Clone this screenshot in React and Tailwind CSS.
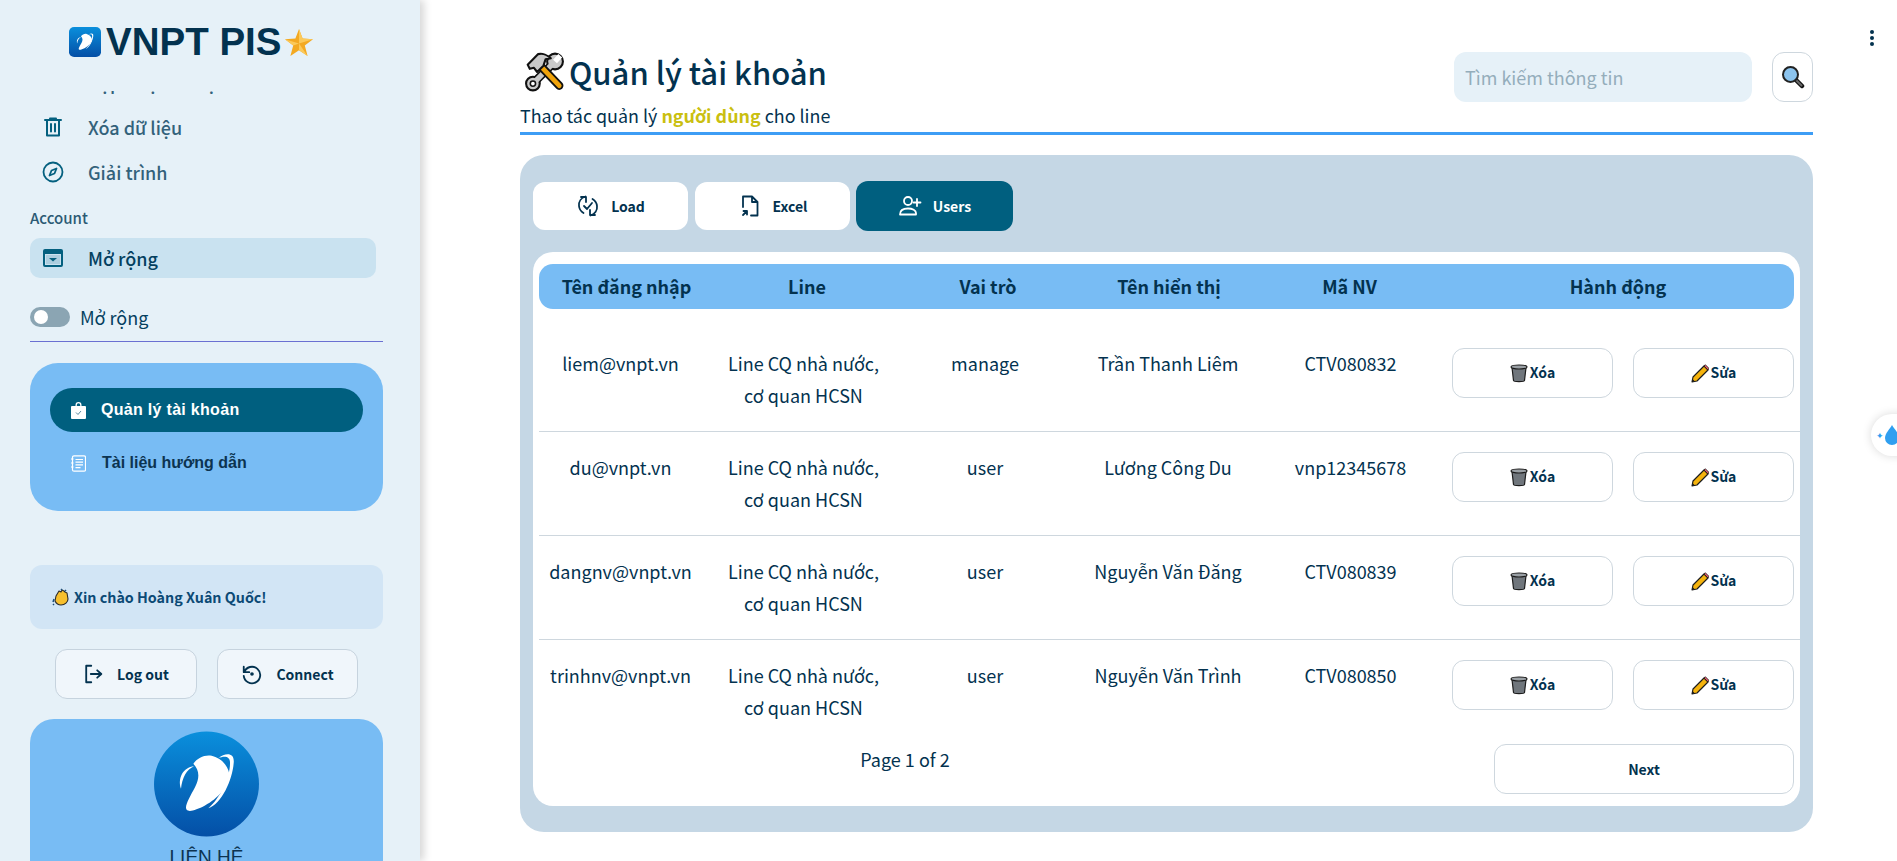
import React from 'react';

const SOURCE = "font-['Noto_Sans_CJK_SC','Noto_Sans',sans-serif]";
const ARIAL = "font-['Liberation_Sans',Arial,sans-serif]";

const rows = [
  { user: 'liem@vnpt.vn', role: 'manage', name: 'Trần Thanh Liêm', code: 'CTV080832' },
  { user: 'du@vnpt.vn', role: 'user', name: 'Lương Công Du', code: 'vnp12345678' },
  { user: 'dangnv@vnpt.vn', role: 'user', name: 'Nguyễn Văn Đăng', code: 'CTV080839' },
  { user: 'trinhnv@vnpt.vn', role: 'user', name: 'Nguyễn Văn Trình', code: 'CTV080850' },
];

const Stroke = ({ size = 24, width = 2, children, className = '' }) => (
  <svg width={size} height={size} viewBox="0 0 24 24" fill="none" stroke="currentColor" strokeWidth={width} strokeLinecap="round" strokeLinejoin="round" className={className}>
    {children}
  </svg>
);

// VNPT swoosh, drawn in the circle's own coordinates
const VnptMark = () => (
  <g fill="#fff">
    <path d="M140 268C132 258 150 228 165 200C180 170 178 150 160 130C172 112 195 102 215 106C240 112 262 130 268 160C272 190 235 235 195 255C170 268 148 276 140 268Z" />
    <path d="M123 205C112 172 130 140 162 137C140 146 126 172 123 205Z" />
    <path d="M235 113C255 97 285 94 281 128C277 178 245 250 205 263C240 235 270 170 270 130C272 108 255 104 235 113Z" />
  </g>
);

const LogoSquare = () => (
  <svg width="32" height="30" viewBox="42 33 315 315" preserveAspectRatio="none">
    <defs>
      <linearGradient id="sq" x1="0" y1="0" x2="0" y2="1">
        <stop offset="0" stopColor="#0a8fdc" />
        <stop offset="1" stopColor="#044fa6" />
      </linearGradient>
    </defs>
    <rect x="42" y="33" width="315" height="315" rx="50" fill="url(#sq)" />
    <VnptMark />
  </svg>
);

const LogoCircle = () => (
  <svg width="105" height="106" viewBox="42 33 315 315">
    <defs>
      <linearGradient id="ci" x1="0" y1="0" x2="0" y2="1">
        <stop offset="0" stopColor="#0a8fdc" />
        <stop offset="1" stopColor="#044fa6" />
      </linearGradient>
    </defs>
    <circle cx="199.5" cy="190.5" r="157.5" fill="url(#ci)" />
    <VnptMark />
  </svg>
);

const StarIcon = () => (
  <svg width="28" height="27" viewBox="0 0 28 27">
    <path d="M14 0L17.6 9.6L28 10.2L19.8 16.6L22.6 27L14 21.2L5.4 27L8.2 16.6L0 10.2L10.4 9.6Z" fill="#f3a922" />
    <path d="M14 0L17.6 9.6L28 10.2L14 14.5ZM22.6 27L14 21.2V14.5ZM0 10.2L14 14.5L8.2 16.6Z" fill="#fbc95a" />
  </svg>
);

const ToolsEmoji = () => (
  <svg width="41" height="40" viewBox="0 0 38 38">
    {/* wrench */}
    <path d="M29 9L9 29" stroke="#111" strokeWidth="8" strokeLinecap="round" />
    <circle cx="29" cy="9" r="7.500" fill="#c9c9c9" stroke="#111" strokeWidth="2" />
    <circle cx="8" cy="30" r="6.500" fill="#c9c9c9" stroke="#111" strokeWidth="2" />
    <path d="M29 9L9 29" stroke="#c9c9c9" strokeWidth="5" />
    <path d="M29 9L34 3.500" stroke="#fff" strokeWidth="5" />
    <circle cx="8" cy="30" r="2.500" fill="#fff" stroke="#111" strokeWidth="1.500" />
    {/* hammer */}
    <path d="M14 12L33 32" stroke="#111" strokeWidth="8" strokeLinecap="round" />
    <path d="M14 12L33 32" stroke="#f0a30a" strokeWidth="4.500" strokeLinecap="round" />
    <path d="M3 12L13 2C17 1 22 3 25 6L20 7L18 13L12 19L9 15L5 16Z" fill="#c9c9c9" stroke="#111" strokeWidth="2" strokeLinejoin="round" />
  </svg>
);

const MagnifierEmoji = () => (
  <svg width="24" height="24" viewBox="0 0 24 24">
    <path d="M14 14l7 7" stroke="#111" strokeWidth="4.500" strokeLinecap="round" />
    <path d="M15 15l5.500 5.500" stroke="#6a6a6a" strokeWidth="2" strokeLinecap="round" />
    <circle cx="9.500" cy="9.500" r="7.500" fill="#8cc4ee" stroke="#222" strokeWidth="2" />
  </svg>
);

const TrashEmoji = () => (
  <svg width="18" height="19" viewBox="0 0 18 19">
    <path d="M2 3.500l1.500 13c.2 1.500 10.800 1.500 11 0l1.500-13Z" fill="#70767c" stroke="#1c1c1c" strokeWidth="1.200" />
    <ellipse cx="9" cy="3" rx="8" ry="2" fill="#9aa0a5" stroke="#1c1c1c" strokeWidth="1.200" />
  </svg>
);

const PencilEmoji = () => (
  <svg width="18" height="19" viewBox="0 0 18 19">
    <path d="M1 18l1-5L13 2l4 4L6 17Z" fill="#f5b30d" stroke="#1c1c1c" strokeWidth="1.200" strokeLinejoin="round" />
    <path d="M13 2l1.300-1.300 3.500 3.500L17 6Z" fill="#e5596a" stroke="#1c1c1c" strokeWidth="0.800" />
    <path d="M1 18l.6-3 2.400 2.400Z" fill="#1c1c1c" />
  </svg>
);

const WaveEmoji = () => (
  <svg width="18" height="19" viewBox="0 0 18 19">
    <path d="M4 8l3-5 2 1 1-2 2 1 1 1 2 1 1 6c0 3-3 6-7 6-3 0-5-2-6-4Z" fill="#f7bf2d" stroke="#2a2a2a" strokeWidth="1.100" strokeLinejoin="round" />
    <path d="M1 14l1-3M2 17l-1-1M9 2l1-1M13 3l1-1" stroke="#1d4f7a" strokeWidth="1.500" />
  </svg>
);

const SideRow = ({ icon, label, active }) => (
  <div className={`flex h-[40px] shrink-0 items-center rounded-[10px] ${active ? 'bg-[#c9e2f0] text-[#04405f]' : 'text-[#33627b]'}`}>
    <span className="flex w-[45px] justify-center text-[#04607f]">{icon}</span>
    <span className="ml-[13px] text-[18px] leading-[26px] font-medium">{label}</span>
  </div>
);

function Sidebar() {
  return (
    <aside className={`${SOURCE} h-[861px] w-[420px] shrink-0 overflow-hidden bg-[#e6f1f8] pl-[30px] pr-[37px] shadow-[4px_0_8px_rgba(0,0,0,0.16)]`}>
      <div className={`${ARIAL} ml-[39px] flex h-[91px] items-start pt-[27px]`}>
        <LogoSquare />
        <span className="ml-[5px] text-[38.500px] leading-[30px] font-bold text-[#03324f]">VNPT PIS</span>
        <span className="ml-[4px] mt-[2px]"><StarIcon /></span>
      </div>

      {/* menu is scrolled, only the bottoms of the first row show */}
      <div className="flex h-[101px] flex-col justify-end gap-[5px] overflow-hidden">
        <SideRow label="Cập nhật dữ liệu" icon={<Stroke size={22} />} />
        <SideRow
          label="Xóa dữ liệu"
          icon={
            <Stroke size={24}>
              <path d="M4 5h16M9 3.500h6M6 5v15.500h12V5M10 9v7.500M14 9v7.500" />
            </Stroke>
          }
        />
        <SideRow
          label="Giải trình"
          icon={
            <Stroke size={24} width={1.800}>
              <circle cx="12" cy="12" r="9.500" />
              <path d="M15.500 8.500l-2 5-5 2 2-5Z" />
            </Stroke>
          }
        />
      </div>

      <div className="mt-[15px] text-[15px] leading-[22px] font-medium text-[#2c5a74]">Account</div>
      <div className="mt-[9px] w-[346px]">
        <SideRow
          active
          label="Mở rộng"
          icon={
            <svg width="24" height="24" viewBox="0 0 24 24" fill="currentColor">
              <path fillRule="evenodd" d="M4 3h16a2 2 0 012 2v14a2 2 0 01-2 2H4a2 2 0 01-2-2V5a2 2 0 012-2Zm0 5v11h16V8Z" />
              <path d="M5 9h14v9H5Z" opacity="0.15" />
              <path d="M8 12h8l-4 3.500Z" />
            </svg>
          }
        />
      </div>

      <div className="mt-[29px] flex items-center text-[#04405f]">
        <div className="flex h-[20px] w-[40px] items-center rounded-full bg-[#8ba5b3] pl-[4px]">
          <div className="h-[14px] w-[14px] rounded-full bg-white" />
        </div>
        <span className="ml-[10px] text-[18px] leading-[20px]">Mở rộng</span>
      </div>
      <div className="mt-[14px] h-px bg-[#6a70d2]" />

      <div className="mt-[21px] h-[148px] rounded-[28px] bg-[#78bcf4] px-[20px] pt-[25px]">
        <div className={`${ARIAL} flex h-[44px] items-center rounded-[22px] bg-[#005f7f] pl-[21px] text-[16px] tracking-[0.3px] font-bold text-white`}>
          <svg width="15" height="17" viewBox="0 0 15 17" fill="#fff">
            <path fillRule="evenodd" d="M4.500 4V3a3 3 0 016 0v1H14a1 1 0 011 1v11a1 1 0 01-1 1H1a1 1 0 01-1-1V5a1 1 0 011-1Zm1.300 0h3.400V3a1.700 1.700 0 00-3.400 0Z" />
            <path d="M5 10.500l2 2 3-3.500" stroke="#5a8aa0" strokeWidth="1" fill="none" />
          </svg>
          <span className="ml-[15px]">Quản lý tài khoản</span>
        </div>
        <div className={`${ARIAL} mt-[9px] flex h-[44px] items-center pl-[21px] text-[16px] font-bold text-[#0c3350]`}>
          <svg width="15" height="17" viewBox="0 0 15 17" fill="none" stroke="#fff" strokeWidth="1.200">
            <rect x="1.500" y="0.800" width="13" height="15.400" rx="1.500" />
            <path d="M4.500 4.500h7.500M4.500 7.200h7.500M4.500 9.900h7.500M4.500 12.600h5M0 4h2.500M0 8h2.500M0 12h2.500" />
          </svg>
          <span className="ml-[16px]">Tài liệu hướng dẫn</span>
        </div>
      </div>

      <div className="mt-[54px] flex h-[64px] items-center rounded-[12px] bg-[#d2e5f5] pl-[22px]">
        <WaveEmoji />
        <span className="ml-[4px] text-[14.300px] leading-[20px] font-bold text-[#0c4a75]">Xin chào Hoàng Xuân Quốc!</span>
      </div>

      <div className="mt-[20px] ml-[25px] flex gap-[20px]">
        <button className="flex h-[50px] w-[142px] items-center justify-center rounded-[12px] border border-[#c6d3de] bg-[#f0f6fb] text-[14px] font-bold text-[#03324f]">
          <Stroke size={22}>
            <path d="M9 3H3.500v18H9M8.500 12H20M15.500 8l4.500 4-4.500 4" />
          </Stroke>
          <span className="ml-[12px]">Log out</span>
        </button>
        <button className="flex h-[50px] w-[141px] items-center justify-center rounded-[12px] border border-[#c6d3de] bg-[#f0f6fb] text-[14px] font-bold text-[#03324f]">
          <Stroke size={22}>
            <path d="M3 4v6h6M3.500 10a9 9 0 11-.5 4" />
            <circle cx="12" cy="12" r="1" fill="currentColor" />
          </Stroke>
          <span className="ml-[13px]">Connect</span>
        </button>
      </div>

      <div className="mt-[20px] flex h-[200px] flex-col items-center rounded-[24px] bg-[#78bcf4] pt-[12px]">
        <LogoCircle />
        <div className={`${ARIAL} mt-[8px] text-[19px] leading-[24px] text-[#0c3350]`}>LIÊN HỆ</div>
      </div>
    </aside>
  );
}

const ToolButton = ({ icon, label, active, className = '' }) => (
  <button className={`flex items-center justify-center rounded-[12px] text-[14px] font-bold ${active ? 'h-[50px] w-[157px] bg-[#005f7f] text-white' : 'h-[48px] w-[155px] bg-white text-[#03324f]'} ${className}`}>
    {icon}
    <span className="ml-[11px]">{label}</span>
  </button>
);

function Table() {
  return (
    <div className="mt-[21px] ml-[13px] mr-[13px] rounded-[20px] bg-white pt-[12px] pb-[12px] text-[#03324f]">
      <div className="ml-[6px] mr-[6px] grid h-[45px] grid-cols-[175px_186px_176px_186px_175px_1fr] items-center rounded-[14px] bg-[#78bcf4] text-center text-[18px] font-bold">
        <span>Tên đăng nhập</span>
        <span>Line</span>
        <span>Vai trò</span>
        <span>Tên hiển thị</span>
        <span>Mã NV</span>
        <span className="pl-[5px]">Hành động</span>
      </div>
      <div className="mt-[19px]">
        {rows.map((r, i) => (
          <div key={r.user} className={`ml-[6px] h-[104px] ${i < rows.length - 1 ? 'border-b border-[#ced7de]' : ''}`}>
            <div className="grid grid-cols-[163px_203px_160px_206px_159px_1fr] pt-[19px] text-center text-[18px] leading-[32px]">
              <span>{r.user}</span>
              <span>Line CQ nhà nước,<br />cơ quan HCSN</span>
              <span>{r.role}</span>
              <span>{r.name}</span>
              <span>{r.code}</span>
              <div className="mt-[1px] flex gap-[20px] pl-[22px]">
                <button className="flex h-[50px] w-[161px] items-center justify-center rounded-[12px] border border-[#ced7de] bg-white text-[14px] font-bold">
                  <TrashEmoji />
                  <span className="ml-[2px] mb-[2px]">Xóa</span>
                </button>
                <button className="flex h-[50px] w-[161px] items-center justify-center rounded-[12px] border border-[#ced7de] bg-white text-[14px] font-bold">
                  <PencilEmoji />
                  <span className="ml-[2px] mb-[2px]">Sửa</span>
                </button>
              </div>
            </div>
          </div>
        ))}
      </div>
      <div className="flex items-start">
        <span className="-mt-[1px] w-[744px] text-center text-[18px] leading-[32px]">Page 1 of 2</span>
        <button className="ml-[217px] h-[50px] w-[300px] rounded-[12px] border border-[#ced7de] bg-white text-[14px] font-bold">Next</button>
      </div>
    </div>
  );
}

export default function App() {
  return (
    <div className={`${SOURCE} relative flex h-[861px] w-[1897px] overflow-hidden bg-white`}>
      <Sidebar />
      <main className="w-[1393px] pl-[100px]">
        <div className="flex h-[132px] items-start justify-between">
          <div className="pt-[50px]">
            <div className="flex h-[44px] items-center pl-[4px]">
              <ToolsEmoji />
              <h1 className="ml-[4px] text-[31px] leading-[44px] font-medium text-[#03324f]">Quản lý tài khoản</h1>
            </div>
            <p className="mt-[9px] text-[17.900px] leading-[24px] text-[#03324f]">
              Thao tác quản lý <span className="font-bold text-[#cabf10]">người dùng</span> cho line
            </p>
          </div>
          <div className="flex gap-[20px] pt-[52px]">
            <div className="flex h-[50px] w-[298px] items-center rounded-[12px] bg-[#e6f1f8] pl-[11px] text-[18px] text-[#94adbb]">Tìm kiếm thông tin</div>
            <button className="flex h-[50px] w-[41px] items-center justify-center rounded-[12px] border border-[#ced7de] bg-white">
              <MagnifierEmoji />
            </button>
          </div>
        </div>
        <div className="h-[3px] bg-[#3d9df5]" />

        <section className="mt-[20px] h-[677px] rounded-[24px] bg-[#c5d7e5] pt-[26px]">
          <div className="ml-[13px] flex items-center gap-[6px]">
            <ToolButton
              label="Load"
              icon={
                <Stroke size={24} width={1.800}>
                  <path d="M9.500 2.500C5 4 2.500 8 3 12c.3 3 2 5.500 4.500 7M14.500 21.500c4.500-1.500 7-5.500 6.500-9.500-.3-3-2-5.500-4.500-7M5 3h5v5M19 21h-5v-5M8 12l3 3 5-6" />
                </Stroke>
              }
            />
            <ToolButton
              className="ml-[1px]"
              label="Excel"
              icon={
                <Stroke size={24} width={1.800}>
                  <path d="M5 13V2.500h9l5.500 5.500v13.500H13M14 2.500V8h5.500" />
                  <path d="M5 21l4-4M5.500 17H9v3.500" />
                </Stroke>
              }
            />
            <ToolButton
              active
              label="Users"
              icon={
                <Stroke size={24} width={1.800}>
                  <circle cx="10" cy="7" r="4" />
                  <path d="M2 20.500c0-4 3.500-6 8-6s8 2 8 4.500v1.500ZM19 5v7M15.500 8.500h7" />
                </Stroke>
              }
            />
          </div>
          <Table />
        </section>
      </main>

      {/* overflow menu and floating chip on top of the page */}
      <div className="absolute top-[30px] left-[1870px] flex flex-col gap-[2px]">
        <span className="h-[4px] w-[4px] rounded-full bg-[#03324f]" />
        <span className="h-[4px] w-[4px] rounded-full bg-[#03324f]" />
        <span className="h-[4px] w-[4px] rounded-full bg-[#03324f]" />
      </div>
      <div className="absolute top-[414px] left-[1871px] flex h-[42px] w-[50px] items-center rounded-full bg-white pl-[5px] shadow-[0_0_10px_rgba(0,0,0,0.15)]">
        <span className="text-[9px] leading-none text-[#2f9ff0]">✦</span>
        <svg width="14" height="20" viewBox="0 0 14 20" className="ml-[1px]">
          <path d="M7 0c2 4 7 8 7 13a7 7 0 01-14 0C0 8 5 4 7 0Z" fill="#2f9ff0" />
        </svg>
      </div>
    </div>
  );
}
